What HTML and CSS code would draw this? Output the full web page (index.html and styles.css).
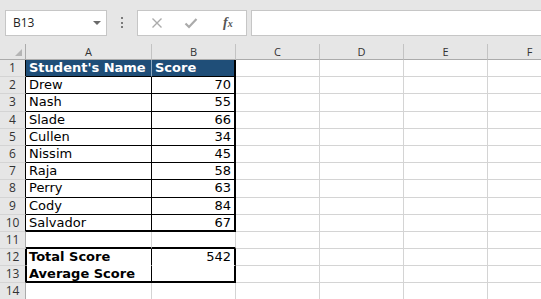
FILE: index.html
```html
<!DOCTYPE html>
<html lang="en">
    <head>
        <meta charset="UTF-8">
        <title>Student Scores</title>
        <link rel="stylesheet" href="styles.css">
    </head>
    <body>
        <div class="toolbar">
            <div class="namebox">
                <span>B13</span>
                <span class="caret"></span>
            </div>
            <div class="dots"><i></i><i></i><i></i></div>
            <div class="fbuttons">
                <svg class="ico-x" width="12" height="12" viewBox="0 0 12 12"><path d="M1.5 1.5 L10.5 10.5 M10.5 1.5 L1.5 10.5" stroke="#ababab" stroke-width="1.4" fill="none"/></svg>
                <svg class="ico-ok" width="14" height="12" viewBox="0 0 14 12"><path d="M1.5 6.5 L5 10 L12.5 2" stroke="#ababab" stroke-width="2.2" fill="none"/></svg>
                <span class="fx">f<sub>x</sub></span>
            </div>
            <div class="finput"></div>
        </div>

        <div class="sheet">
            <div class="corner"><span class="tri"></span></div>
            <div class="colhead">A</div>
            <div class="colhead">B</div>
            <div class="colhead">C</div>
            <div class="colhead">D</div>
            <div class="colhead">E</div>
            <div class="colhead">F</div>

            <div class="rowhead edge">1</div>
            <div class="cell a tbl title">Student's Name</div>
            <div class="cell b tbl title">Score</div>
            <div class="cell"></div><div class="cell"></div><div class="cell"></div><div class="cell"></div>

            <div class="rowhead edge">2</div>
            <div class="cell a tbl">Drew</div>
            <div class="cell b tbl num">70</div>
            <div class="cell"></div><div class="cell"></div><div class="cell"></div><div class="cell"></div>

            <div class="rowhead edge">3</div>
            <div class="cell a tbl">Nash</div>
            <div class="cell b tbl num">55</div>
            <div class="cell"></div><div class="cell"></div><div class="cell"></div><div class="cell"></div>

            <div class="rowhead edge">4</div>
            <div class="cell a tbl">Slade</div>
            <div class="cell b tbl num">66</div>
            <div class="cell"></div><div class="cell"></div><div class="cell"></div><div class="cell"></div>

            <div class="rowhead edge">5</div>
            <div class="cell a tbl">Cullen</div>
            <div class="cell b tbl num">34</div>
            <div class="cell"></div><div class="cell"></div><div class="cell"></div><div class="cell"></div>

            <div class="rowhead edge">6</div>
            <div class="cell a tbl">Nissim</div>
            <div class="cell b tbl num">45</div>
            <div class="cell"></div><div class="cell"></div><div class="cell"></div><div class="cell"></div>

            <div class="rowhead edge">7</div>
            <div class="cell a tbl">Raja</div>
            <div class="cell b tbl num">58</div>
            <div class="cell"></div><div class="cell"></div><div class="cell"></div><div class="cell"></div>

            <div class="rowhead edge">8</div>
            <div class="cell a tbl">Perry</div>
            <div class="cell b tbl num">63</div>
            <div class="cell"></div><div class="cell"></div><div class="cell"></div><div class="cell"></div>

            <div class="rowhead edge">9</div>
            <div class="cell a tbl">Cody</div>
            <div class="cell b tbl num">84</div>
            <div class="cell"></div><div class="cell"></div><div class="cell"></div><div class="cell"></div>

            <div class="rowhead edge">10</div>
            <div class="cell a tbl last">Salvador</div>
            <div class="cell b tbl num last">67</div>
            <div class="cell"></div><div class="cell"></div><div class="cell"></div><div class="cell"></div>

            <div class="rowhead">11</div>
            <div class="cell above"></div>
            <div class="cell above"></div>
            <div class="cell"></div><div class="cell"></div><div class="cell"></div><div class="cell"></div>

            <div class="rowhead edge">12</div>
            <div class="cell a tbl box open">Total Score</div>
            <div class="cell b tbl num open">542</div>
            <div class="cell"></div><div class="cell"></div><div class="cell"></div><div class="cell"></div>

            <div class="rowhead edge">13</div>
            <div class="cell a tbl box last">Average Score</div>
            <div class="cell b tbl last"></div>
            <div class="cell"></div><div class="cell"></div><div class="cell"></div><div class="cell"></div>

            <div class="rowhead">14</div>
            <div class="cell"></div><div class="cell"></div>
            <div class="cell"></div><div class="cell"></div><div class="cell"></div><div class="cell"></div>
        </div>
    </body>
</html>
```

FILE: styles.css
```css
/* Page */
body {
    margin: 0;
    background: #e6e6e6;
    font-family: "DejaVu Sans", Verdana, sans-serif;
    overflow: hidden;
}

/* Formula bar */
.toolbar {
    display: flex;
    align-items: center;
    height: 25px;
    padding: 10px 0 9px 5px;
}

.namebox {
    box-sizing: border-box;
    width: 102px;
    height: 26px;
    background: #fff;
    border: 1px solid #c6c6c6;
    display: flex;
    align-items: center;
    justify-content: space-between;
    padding: 0 5px 0 7px;
    font-family: "Open Sans", sans-serif;
    font-size: 12px;
    color: #222;
}

.caret {
    width: 0;
    height: 0;
    border-left: 4px solid transparent;
    border-right: 4px solid transparent;
    border-top: 4px solid #6a6a6a;
}

.dots {
    width: 30px;
    display: flex;
    flex-direction: column;
    align-items: center;
    gap: 2.5px;
}

.dots i {
    display: block;
    width: 2px;
    height: 2px;
    background: #7a7a7a;
}

.fbuttons {
    box-sizing: border-box;
    width: 110px;
    height: 26px;
    background: #fff;
    border: 1px solid #c6c6c6;
    display: flex;
    align-items: center;
    padding-left: 13px;
}

.ico-x {
    margin-right: 21px;
}

.ico-ok {
    margin-right: 25px;
}

.fx {
    font-family: "Liberation Serif", serif;
    font-style: italic;
    font-weight: bold;
    font-size: 14px;
    color: #555;
}

.fx sub {
    font-size: 10px;
    vertical-align: 0;
}

.finput {
    box-sizing: border-box;
    flex: 1;
    height: 26px;
    margin-left: 4px;
    background: #fff;
    border: 1px solid #c6c6c6;
    border-right: none;
}

/* Sheet grid */
.sheet {
    display: grid;
    grid-template-columns: 26px 126px 84px 84px 84px 84px 84px;
    grid-template-rows: 16px repeat(14, 17.2px);
    background: #fff;
    overflow: hidden;
}

.sheet > div {
    box-sizing: border-box;
}

.corner {
    background: #e6e6e6;
    border-right: 1px solid #ababab;
    border-bottom: 1px solid #ababab;
    position: relative;
}

.tri {
    position: absolute;
    right: 3px;
    bottom: 3px;
    width: 0;
    height: 0;
    border-left: 7px solid transparent;
    border-bottom: 7px solid #b5b5b5;
}

.colhead {
    background: #e6e6e6;
    border-right: 1px solid #c3c3c3;
    border-bottom: 1px solid #ababab;
    font-family: "Open Sans", sans-serif;
    font-size: 11px;
    line-height: 15px;
    color: #333;
    text-align: center;
}

.rowhead {
    background: #e6e6e6;
    border-right: 1px solid #ababab;
    border-bottom: 1px solid #d4d4d4;
    font-family: "Open Sans", sans-serif;
    font-size: 12px;
    line-height: 16px;
    color: #333;
    text-align: center;
}

.rowhead.edge {
    border-right-color: #000;
}

/* Cells */
.cell {
    border-right: 1px solid #d4d4d4;
    border-bottom: 1px solid #d4d4d4;
    font-size: 13px;
    line-height: 16px;
    padding: 0 3px;
    color: #000;
    white-space: nowrap;
}

.cell.num {
    text-align: right;
}

.cell.tbl {
    border-bottom-color: #000;
}

.cell.a.tbl {
    border-right-color: #000;
}

.cell.b.tbl {
    border-right: 2px solid #000;
}

.cell.title {
    background: #1f4e78;
    color: #fff;
    font-weight: bold;
}

.cell.a.title {
    border-right-color: #8ea9c1;
}

.cell.last,
.cell.above {
    border-bottom: 2px solid #000;
}

.cell.open {
    border-bottom-color: #fff;
}

.cell.box {
    font-weight: bold;
    border-left: 1px solid #000;
    padding-left: 2px;
}
```
